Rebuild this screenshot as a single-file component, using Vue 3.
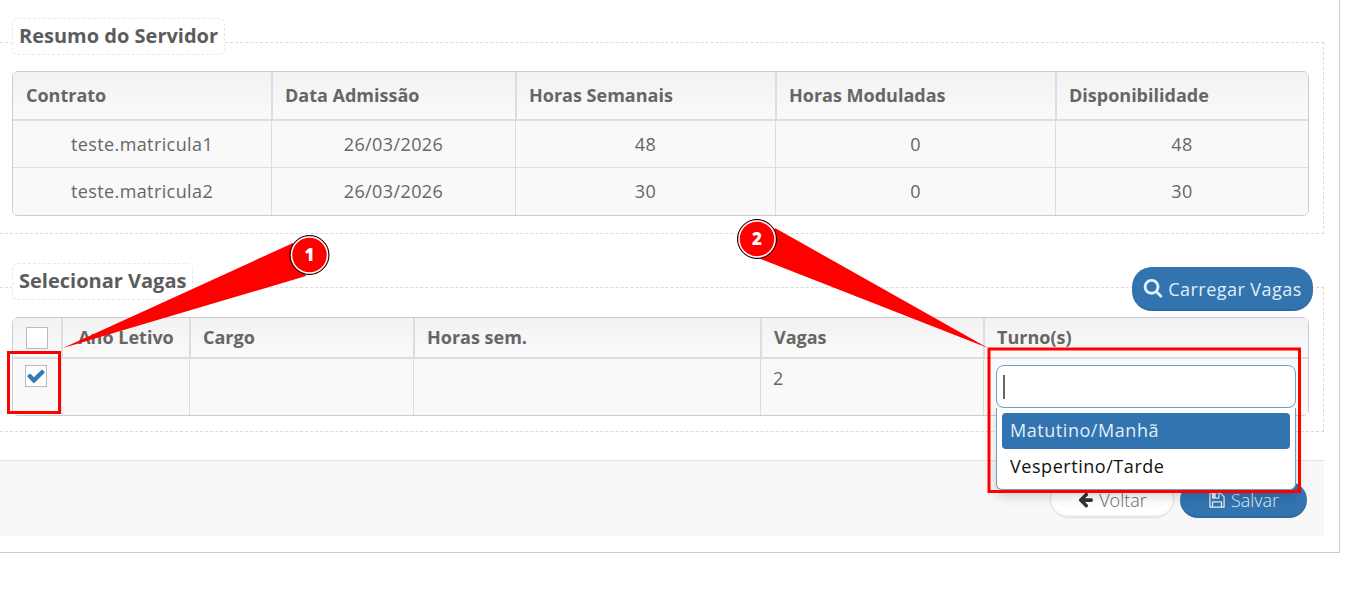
<template>
  <div class="page">
    <div class="panel">
      <section class="group">
        <div class="legend">Resumo do Servidor</div>
        <div class="table-box">
          <table class="grid">
            <colgroup>
              <col v-for="w in resumoCols" :key="w" :style="{ width: w + 'px' }" />
            </colgroup>
            <thead>
              <tr>
                <th v-for="h in resumoHead" :key="h">{{ h }}</th>
              </tr>
            </thead>
            <tbody>
              <tr v-for="row in resumoRows" :key="row[0]">
                <td v-for="(c, i) in row" :key="i" class="center">{{ c }}</td>
              </tr>
            </tbody>
          </table>
        </div>
      </section>

      <section class="group second">
        <div class="legend-row">
          <div class="legend">Selecionar Vagas</div>
          <button class="btn primary load">
            <svg class="ico search" viewBox="0 0 1664 1792"><path fill="currentColor" d="M1152 704q0-185-131.500-316.500t-316.500-131.500-316.500 131.500-131.500 316.500 131.500 316.500 316.500 131.500 316.500-131.500 131.500-316.500zm512 832q0 52-38 90t-90 38q-54 0-90-38l-343-342q-179 124-399 124-143 0-273.500-55.500t-225-150-150-225-55.500-273.500 55.500-273.500 150-225 225-150 273.500-55.500 273.500 55.500 225 150 150 225 55.500 273.500q0 220-124 399l343 343q37 37 37 90z"/></svg>
            Carregar Vagas
          </button>
        </div>
        <div class="table-box">
          <table class="grid vagas">
            <colgroup>
              <col v-for="(w, i) in vagasCols" :key="i" :style="{ width: w + 'px' }" />
            </colgroup>
            <thead>
              <tr>
                <th class="check-cell"><span class="check"></span></th>
                <th v-for="h in vagasHead" :key="h">{{ h }}</th>
              </tr>
            </thead>
            <tbody>
              <tr>
                <td class="check-cell">
                  <span class="check">
                    <svg viewBox="0 0 1792 1792"><path fill="#337ab7" d="M1671 566q0 40-28 68l-724 724-136 136q-28 28-68 28t-68-28l-136-136-362-362q-28-28-28-68t28-68l136-136q28-28 68-28t68 28l294 295 656-657q28-28 68-28t68 28l136 136q28 28 28 68z"/></svg>
                  </span>
                </td>
                <td></td>
                <td></td>
                <td></td>
                <td>2</td>
                <td class="turno">
                  <div class="select-box"><span class="caret"></span></div>
                  <ul class="dropdown">
                    <li class="active">Matutino/Manhã</li>
                    <li>Vespertino/Tarde</li>
                  </ul>
                </td>
              </tr>
            </tbody>
          </table>
        </div>
      </section>

      <footer class="actions">
        <button class="btn ghost">
          <svg class="ico arrow" viewBox="0 0 1792 1792"><path fill="#333" d="M1664 896v128q0 53-32.500 90.500t-84.500 37.500h-704l293 294q38 36 38 90t-38 90l-75 76q-37 37-90 37-52 0-91-37l-651-652q-37-37-37-90 0-52 37-91l651-650q38-38 91-38 52 0 90 38l75 74q38 38 38 91t-38 91l-293 293h704q52 0 84.500 37.500t32.500 90.500z"/></svg>
          Voltar
        </button>
        <button class="btn primary save">
          <svg class="ico" viewBox="0 0 1792 1792"><path fill="currentColor" d="M512 1536h768v-384h-768v384zm896 0h128v-896q0-14-10-38.500t-20-34.500l-281-281q-10-10-34-20t-39-10v416q0 40-28 68t-68 28h-576q-40 0-68-28t-28-68v-416h-128v1280h128v-416q0-40 28-68t68-28h832q40 0 68 28t28 68v416zm-384-928v-320q0-13-9.500-22.500t-22.500-9.500h-192q-13 0-22.500 9.500t-9.500 22.500v320q0 13 9.500 22.500t22.500 9.500h192q13 0 22.500-9.500t9.500-22.500zm640 32v928q0 40-28 68t-68 28h-1344q-40 0-68-28t-28-68v-1344q0-40 28-68t68-28h928q40 0 88 20t76 48l280 280q28 28 48 76t20 88z"/></svg>
          Salvar
        </button>
      </footer>
    </div>

    <!-- anotacoes em vermelho por cima da tela -->
    <svg class="marks" width="1357" height="601" viewBox="0 0 1357 601">
      <rect x="8.500" y="352.500" width="51" height="60" fill="none" stroke="#f00" stroke-width="3" />
      <rect x="989" y="349" width="310.500" height="142.500" fill="none" stroke="#f00" stroke-width="3" />
      <polygon points="293,243 306,276 63,348" fill="#f00" />
      <polygon points="775,228 758,258 988,348" fill="#f00" />
      <g v-for="m in marks" :key="m.n">
        <circle :cx="m.x" :cy="m.y" r="19.500" fill="#f00" stroke="#000" stroke-width="1" />
        <circle :cx="m.x" :cy="m.y" r="18" fill="#f00" stroke="#fff" stroke-width="1.500" />
        <text :x="m.x" :y="m.y + 6" class="mark-text" text-anchor="middle">{{ m.n }}</text>
      </g>
    </svg>
  </div>
</template>

<script setup>
const resumoCols = [258, 244, 260, 280, 253]
const resumoHead = ['Contrato', 'Data Admissão', 'Horas Semanais', 'Horas Moduladas', 'Disponibilidade']
const resumoRows = [
  ['teste.matricula1', '26/03/2026', '48', '0', '48'],
  ['teste.matricula2', '26/03/2026', '30', '0', '30']
]

const vagasCols = [48, 128, 224, 347, 223, 325]
const vagasHead = ['Ano Letivo', 'Cargo', 'Horas sem.', 'Vagas', 'Turno(s)']

const marks = [
  { n: 1, x: 309.5, y: 255 },
  { n: 2, x: 757, y: 239 }
]
</script>

<style>
html,
body {
  background: #fff;
}
</style>

<style scoped>
.page {
  position: relative;
  width: 1357px;
  height: 601px;
  overflow: hidden;
  font-family: "Open Sans", "Liberation Sans", sans-serif;
  color: #666;
}

.panel {
  width: 1340px;
  height: 553px;
  box-sizing: border-box;
  border-right: 1px solid #ccc;
  border-bottom: 1px solid #ccc;
  padding-top: 42px;
  overflow: hidden;
}

.group {
  width: 1334px;
  height: 192px;
  margin-left: -10px;
  box-sizing: border-box;
  border: 1px dashed #dcdcdc;
  padding: 0 14px 0 21px;
}

.second {
  height: 145px;
  margin-top: 53px;
}

.legend {
  width: fit-content;
  height: 37px;
  box-sizing: border-box;
  margin-top: -25px;
  margin-bottom: 16px;
  padding: 0 6px;
  border: 1px dashed #e8e8e8;
  border-radius: 6px;
  background: #fff;
  font-size: 20px;
  line-height: 34px;
  font-weight: 700;
  color: #5c5c5c;
}

.legend-row {
  display: flex;
  justify-content: space-between;
  align-items: flex-start;
  margin-bottom: 1px;
}

.table-box {
  width: 1297px;
  box-sizing: border-box;
  border: 1px solid #ccc;
  border-radius: 6px;
  overflow: hidden;
}

.grid {
  width: 1295px;
  table-layout: fixed;
  border-collapse: separate;
  border-spacing: 0;
  font-size: 18px;
  letter-spacing: 0.4px;
}

.grid th {
  height: 49px;
  padding: 0 12px 2px;
  box-sizing: border-box;
  text-align: left;
  font-weight: 700;
  font-size: 18px;
  letter-spacing: 0;
  color: #666;
  background: linear-gradient(#f2f2f2, #fafafa);
  border-left: 2px solid #ddd;
  border-bottom: 2px solid #ddd;
}

.grid th:first-child {
  padding-left: 13px;
}

.grid td {
  height: 47px;
  padding: 0 12px;
  box-sizing: border-box;
  background: #f9f9f9;
  border-left: 1px solid #ddd;
  border-bottom: 1px solid #ddd;
}

.grid th:first-child,
.grid td:first-child {
  border-left: 0;
}

.grid tr:last-child td {
  border-bottom: 0;
  padding-bottom: 1px;
}

.center {
  text-align: center;
}

.vagas th {
  height: 41px;
}

.vagas th:nth-child(2) {
  text-align: center;
}

.vagas td {
  height: 56px;
  vertical-align: top;
  padding-top: 7px;
}

.check-cell {
  padding: 0 !important;
}

.check {
  display: block;
  width: 22px;
  height: 22px;
  box-sizing: border-box;
  margin: 0 0 0 13px;
  border: 1px solid #bbb;
  background: #fff;
}

.vagas td.check-cell .check {
  margin: 6px 0 0 12px;
}

.check svg {
  display: block;
  width: 20px;
  height: 20px;
}

.turno {
  position: relative;
}

.table-box:has(.turno) {
  overflow: visible;
}

.vagas td.turno {
  padding: 6px 12px 0 12px;
}

.select-box {
  height: 43px;
  box-sizing: border-box;
  padding: 9px 6px;
  border: 1px solid #6a9fd0;
  border-radius: 8px;
  background: #fff;
}

.caret {
  display: block;
  width: 2px;
  height: 24px;
  background: #666;
}

.dropdown {
  position: absolute;
  left: 12px;
  top: 49px;
  width: 300px;
  height: 82px;
  box-sizing: border-box;
  margin: 0;
  padding: 5px;
  list-style: none;
  background: #fff;
  border: 1px solid #6a9fd0;
  border-top: 0;
  border-radius: 0 0 6px 6px;
  box-shadow: 0 6px 12px rgba(0, 0, 0, 0.18);
  color: #111;
  letter-spacing: 0.55px;
}

.dropdown li {
  height: 36px;
  padding-left: 8px;
  line-height: 35px;
  border-radius: 4px;
}

.dropdown .active {
  background: #3174af;
  color: #e3eef7;
}

.btn {
  display: flex;
  align-items: center;
  justify-content: center;
  gap: 5px;
  box-sizing: border-box;
  font-family: inherit;
  font-size: 18px;
}

.primary {
  border: 0;
  background: #3174af;
  color: #e3eef7;
  box-shadow: inset 0 -2px 0 rgba(0, 0, 0, 0.08);
}

.load {
  width: 181px;
  height: 44px;
  margin: -21px -4px 0 0;
  border-radius: 20px;
  letter-spacing: 0.45px;
}

.ico {
  width: 18px;
  height: 18px;
}

.search {
  width: 20px;
  height: 20px;
}

.arrow {
  width: 17px;
  height: 17px;
}

.actions {
  display: flex;
  justify-content: flex-end;
  gap: 6px;
  width: 1324px;
  height: 76px;
  box-sizing: border-box;
  margin-top: 28px;
  padding: 21px 17px 0 0;
  background: #f8f8f8;
  border-top: 1px solid #e5e5e5;
}

.actions .btn {
  height: 36px;
  padding-bottom: 2px;
  border-radius: 18px;
  font-weight: 300;
}

.ghost {
  width: 124px;
  border: 1px solid #ddd;
  background: #fff;
  color: #666;
  box-shadow: inset 0 -2px 0 rgba(0, 0, 0, 0.05);
}

.save {
  width: 127px;
}

.marks {
  position: absolute;
  left: 0;
  top: 0;
  pointer-events: none;
}

.mark-text {
  font-family: "Open Sans", sans-serif;
  font-size: 17px;
  font-weight: 800;
  fill: #fff;
}
</style>
